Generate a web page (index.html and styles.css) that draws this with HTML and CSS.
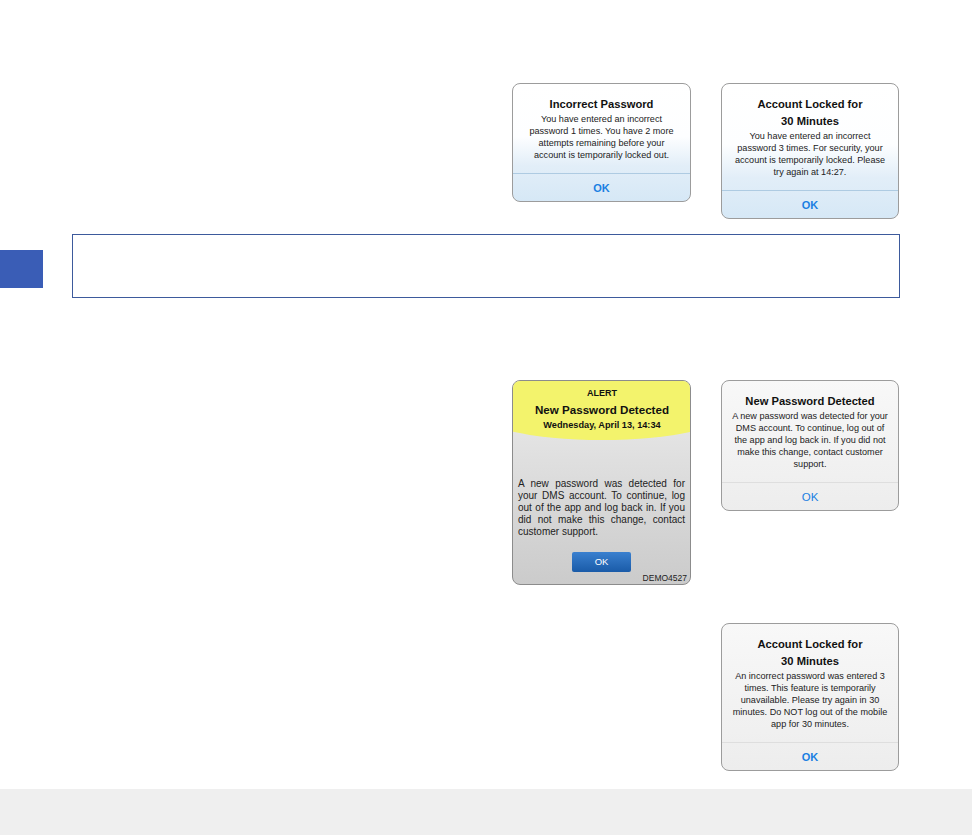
FILE: index.html
```html
<!DOCTYPE html>
<html lang="en">
<head>
    <meta charset="UTF-8">
    <meta name="viewport" content="width=device-width, initial-scale=1.0">
    <title>Password Alerts</title>
    <link rel="stylesheet" href="styles.css">
</head>
<body>
    <div class="page">
        <!-- Lockout messages -->
        <div class="row row-first">
            <div class="ios-alert blue w179">
                <div class="ios-content">
                    <div class="ios-title">Incorrect Password</div>
                    <div class="ios-body">You have entered an incorrect password 1 times. You have 2 more attempts remaining before your account is temporarily locked out.</div>
                </div>
                <div class="ios-button">OK</div>
            </div>
            <div class="ios-alert blue w178">
                <div class="ios-content">
                    <div class="ios-title">Account Locked for<br>30 Minutes</div>
                    <div class="ios-body">You have entered an incorrect password 3 times. For security, your account is temporarily locked. Please try again at 14:27.</div>
                </div>
                <div class="ios-button">OK</div>
            </div>
        </div>

        <div class="note-row">
            <div class="side-tab"></div>
            <div class="note"></div>
        </div>

        <!-- New password messages -->
        <div class="row row-second">
            <div class="android-alert">
                <div class="android-head">
                    <div class="android-label">ALERT</div>
                    <div class="android-title">New Password Detected</div>
                    <div class="android-date">Wednesday, April 13, 14:34</div>
                </div>
                <div class="android-body">A new password was detected for your DMS account. To continue, log out of the app and log back in. If you did not make this change, contact customer support.</div>
                <div class="android-actions">
                    <div class="android-ok">OK</div>
                </div>
                <div class="android-code">DEMO4527</div>
            </div>
            <div class="ios-alert gray w178">
                <div class="ios-content">
                    <div class="ios-title">New Password Detected</div>
                    <div class="ios-body">A new password was detected for your DMS account. To continue, log out of the app and log back in. If you did not make this change, contact customer support.</div>
                </div>
                <div class="ios-button light">OK</div>
            </div>
        </div>

        <div class="row row-third">
            <div class="ios-alert gray w178">
                <div class="ios-content">
                    <div class="ios-title">Account Locked for<br>30 Minutes</div>
                    <div class="ios-body">An incorrect password was entered 3 times. This feature is temporarily unavailable. Please try again in 30 minutes. Do NOT log out of the mobile app for 30 minutes.</div>
                </div>
                <div class="ios-button">OK</div>
            </div>
        </div>
    </div>
    <div class="footer"></div>
</body>
</html>
```

FILE: styles.css
```css
* {
    box-sizing: border-box;
}
body {
    margin: 0;
    background: #fff;
    font-family: "Liberation Sans", Arial, sans-serif;
    color: #111;
    height: 835px;
    overflow: hidden;
}
.page {
    padding-top: 83px;
}
.row {
    display: flex;
    align-items: flex-start;
    gap: 30px;
}
.row-first {
    padding-left: 512px;
}
.row-second {
    padding-left: 512px;
    margin-top: 82px;
}
.row-third {
    padding-left: 721px;
    margin-top: 38px;
}
.note-row {
    display: flex;
    align-items: flex-start;
    margin-top: 15px;
}
.side-tab {
    width: 43px;
    height: 38px;
    margin-top: 16px;
    background: #3a5db6;
}
.note {
    width: 828px;
    height: 64px;
    margin-left: 29px;
    border: 1px solid #3d5a9c;
}

/* iOS style alerts */
.ios-alert {
    border: 1px solid #9c9c9c;
    border-radius: 8px;
    text-align: center;
    overflow: hidden;
}
.w179 {
    width: 179px;
}
.w178 {
    width: 178px;
}
.ios-alert.blue {
    background: linear-gradient(#fff 0%, #fdfeff 45%, #e2eef8 70%, #d6e8f6 100%);
}
.ios-alert.gray {
    background: linear-gradient(#f8f8f8, #ededed);
}
.ios-content {
    padding: 12px 9px 12px;
}
.ios-title {
    font-size: 11.2px;
    font-weight: bold;
    line-height: 17px;
    color: #111;
}
.ios-body {
    font-size: 9.1px;
    line-height: 12px;
    color: #222;
}
.ios-button {
    height: 28px;
    line-height: 28px;
    font-size: 11px;
    font-weight: bold;
    color: #1a7fe2;
}
.blue .ios-button {
    border-top: 1px solid #aecbe2;
}
.gray .ios-button {
    border-top: 1px solid #dedede;
}
.ios-button.light {
    font-weight: normal;
    font-size: 11.5px;
}

/* Android style alert */
.android-alert {
    width: 179px;
    height: 205px;
    border: 1px solid #8c8c8c;
    border-radius: 8px;
    overflow: hidden;
    background: linear-gradient(#ececec, #cbcbcb);
    text-align: center;
}
.android-head {
    width: 260px;
    height: 59px;
    margin-left: -41px;
    padding-top: 6px;
    background: #f3f36c;
    border-radius: 0 0 50% 50% / 0 0 30px 30px;
}
.android-label {
    font-size: 9px;
    font-weight: bold;
    line-height: 12px;
}
.android-title {
    margin-top: 3px;
    font-size: 11.6px;
    font-weight: bold;
    line-height: 16px;
}
.android-date {
    font-size: 9.2px;
    font-weight: bold;
    line-height: 14px;
}
.android-body {
    margin-top: 38px;
    padding: 0 5px;
    font-size: 10px;
    line-height: 12px;
    text-align: justify;
    color: #222;
}
.android-actions {
    display: flex;
    justify-content: center;
    margin-top: 14px;
}
.android-ok {
    width: 59px;
    height: 20px;
    line-height: 20px;
    font-size: 9.5px;
    color: #fff;
    border-radius: 2px;
    background: linear-gradient(#3a80cf, #1a5ba8);
}
.android-code {
    margin-top: 1px;
    padding-right: 3px;
    text-align: right;
    font-size: 8.5px;
    line-height: 10px;
    color: #222;
}

.footer {
    position: absolute;
    left: 0;
    right: 0;
    top: 789px;
    height: 46px;
    background: #efefef;
}
```
